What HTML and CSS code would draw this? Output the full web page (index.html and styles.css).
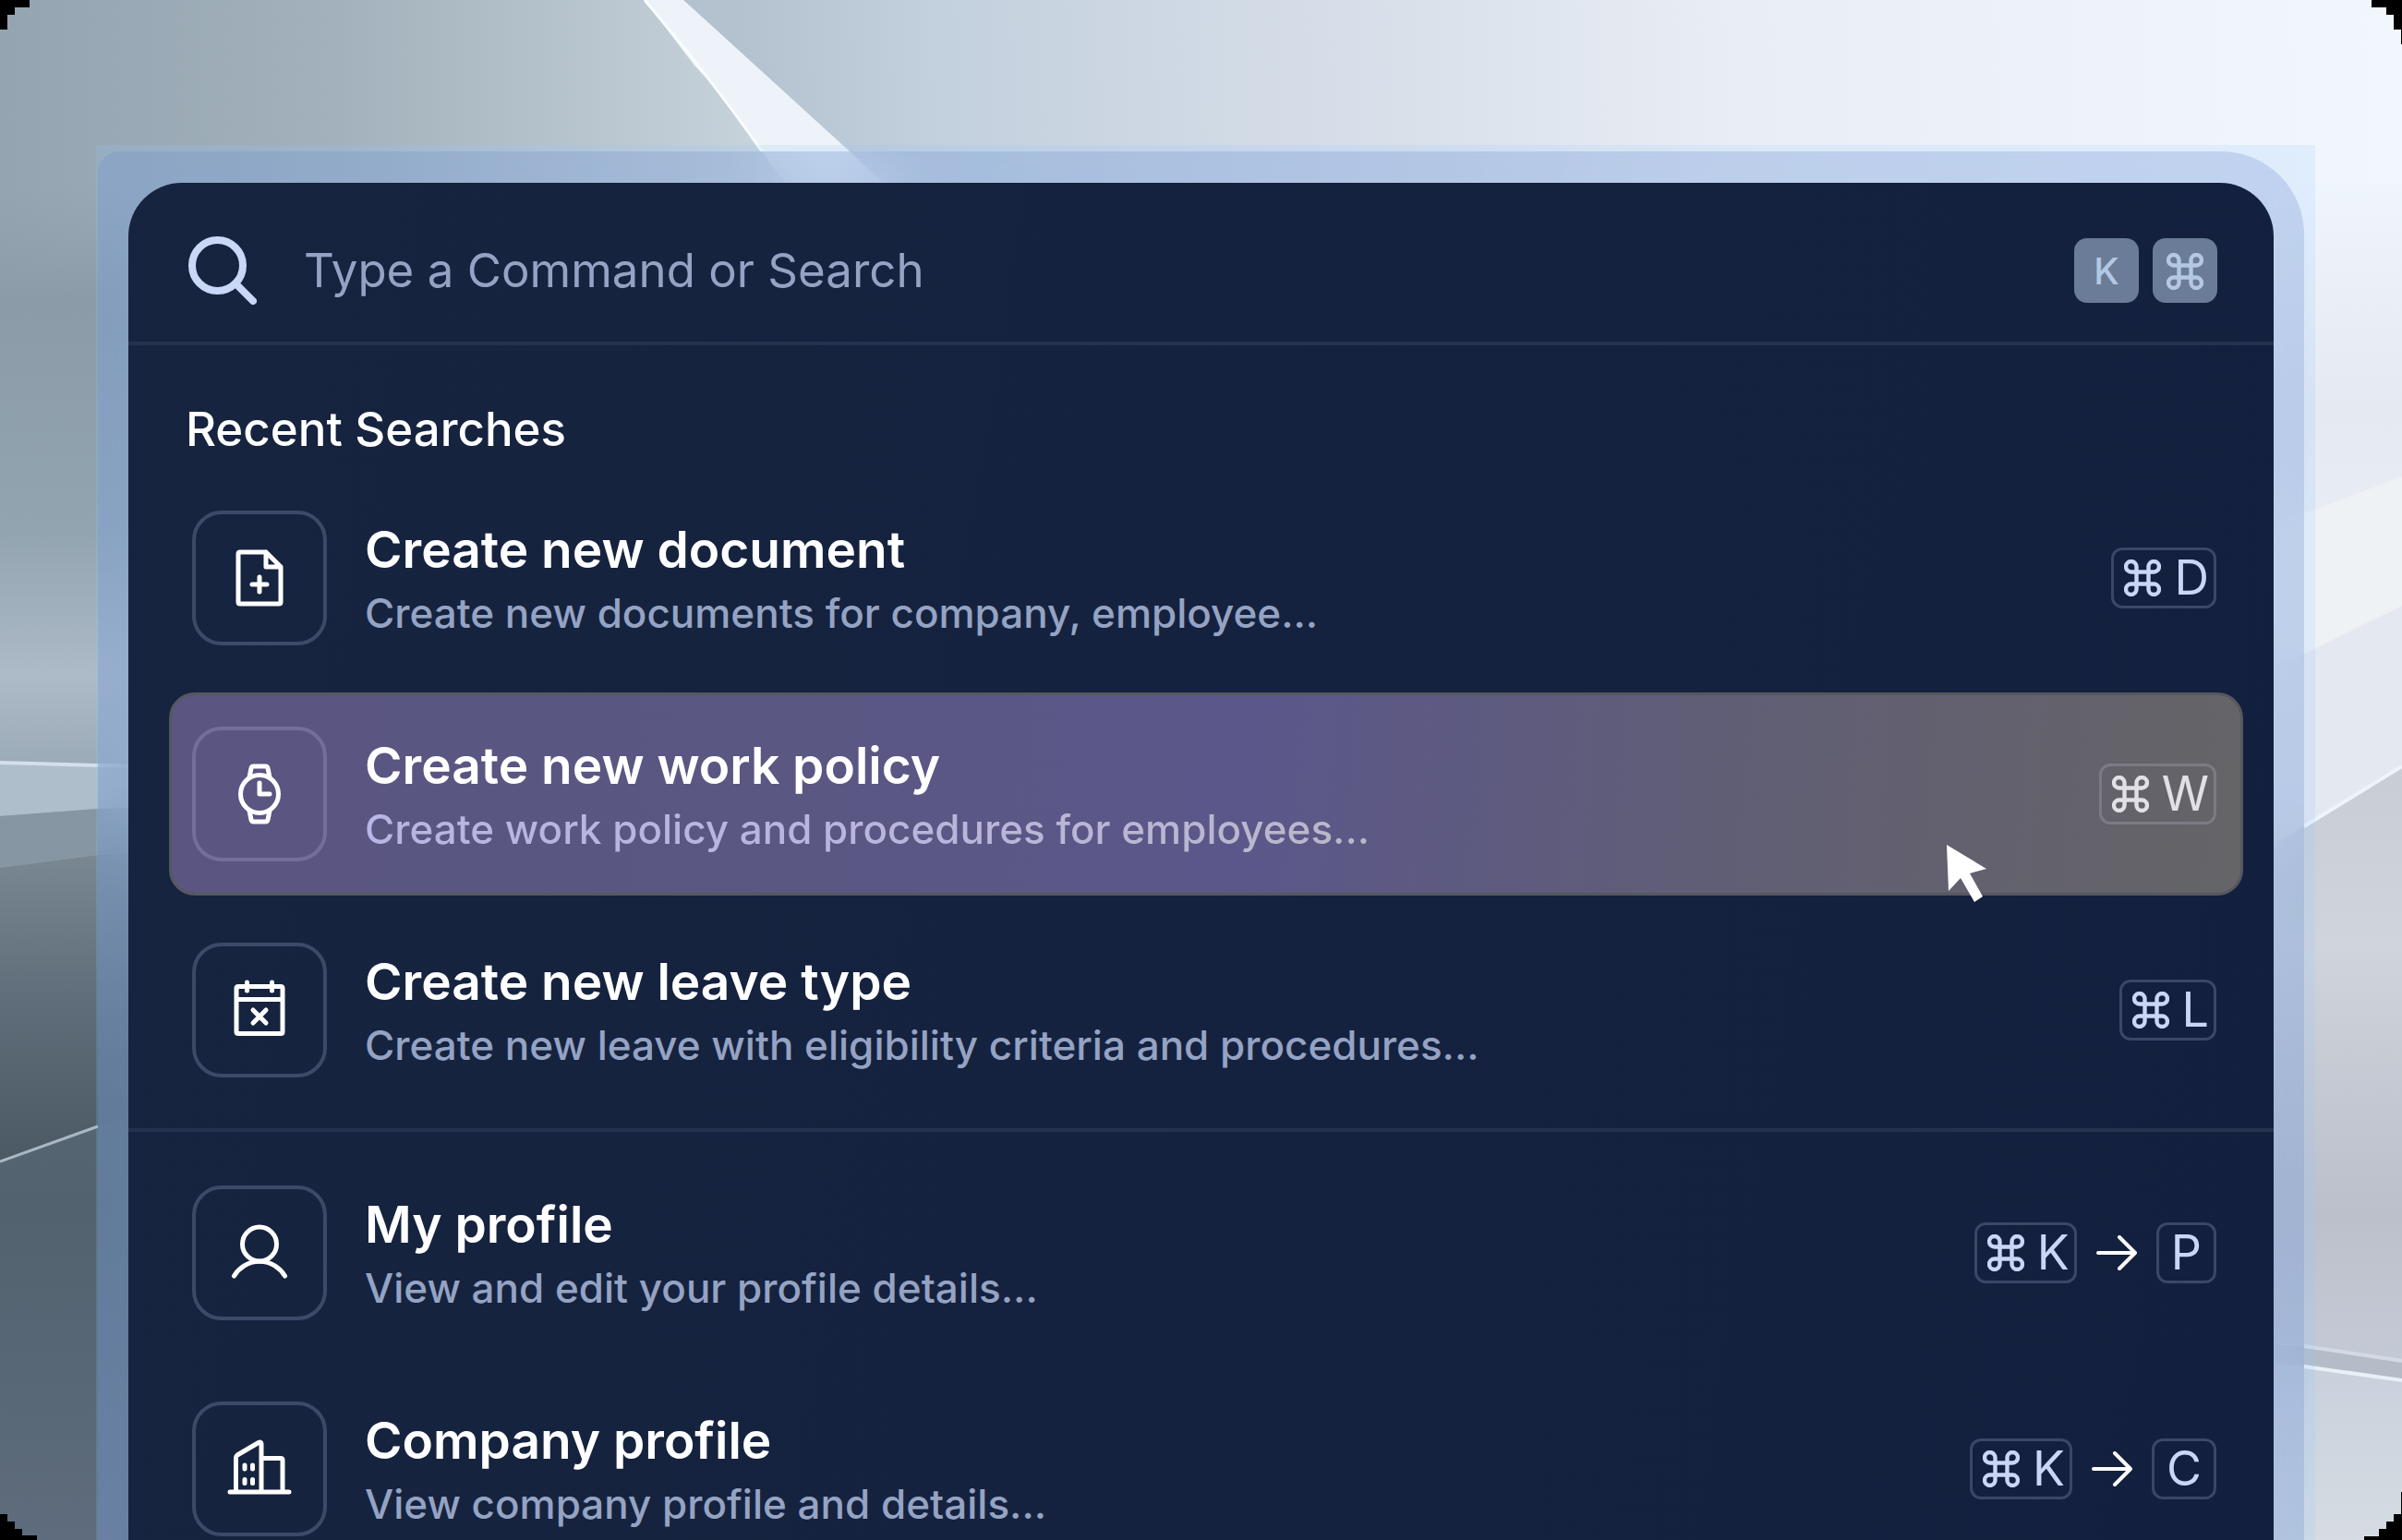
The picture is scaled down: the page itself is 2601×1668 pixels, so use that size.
FILE: index.html
```html
<!DOCTYPE html>
<html lang="en">
<head>
<meta charset="utf-8">
<meta name="viewport" content="width=device-width, initial-scale=1">
<title>Command palette</title>
<link rel="stylesheet" href="styles.css">
</head>
<body>
<svg class="wallpaper" viewBox="0 0 2601 1668" preserveAspectRatio="none" aria-hidden="true">
  <defs>
    <linearGradient id="sky" x1="0" x2="1" y1="0" y2="0">
      <stop offset="0" stop-color="#94a4b1"/><stop offset=".14" stop-color="#a2b1bb"/><stop offset=".31" stop-color="#c6d2da"/>
    </linearGradient>
    <linearGradient id="skyRight" gradientUnits="userSpaceOnUse" x1="800" x2="2601" y1="60" y2="0">
      <stop offset="0" stop-color="#b4c1ce"/><stop offset=".12" stop-color="#c3d0dd"/><stop offset=".4" stop-color="#d9e0ea"/><stop offset=".6" stop-color="#e9eef5"/><stop offset="1" stop-color="#f2f7fe"/>
    </linearGradient>
    <linearGradient id="leftWall" x1="0" x2="0" y1="0" y2="1">
      <stop offset="0" stop-color="#8f9fab" stop-opacity="0"/><stop offset=".2" stop-color="#8b9ba8"/><stop offset=".6" stop-color="#93a4b1"/><stop offset=".85" stop-color="#adbac7"/><stop offset="1" stop-color="#9cabb8"/>
    </linearGradient>
    <linearGradient id="slope" x1="0" x2="0" y1="0" y2="1">
      <stop offset="0" stop-color="#7e8c96"/><stop offset=".5" stop-color="#5f6e7a"/><stop offset="1" stop-color="#4b5964"/>
    </linearGradient>
    <linearGradient id="floor" x1="0" x2="0" y1="0" y2="1">
      <stop offset="0" stop-color="#5b6c7a"/><stop offset=".4" stop-color="#52626e"/><stop offset="1" stop-color="#5e6c7d"/>
    </linearGradient>
    <linearGradient id="rightWall" x1="0" x2="0" y1="0" y2="1">
      <stop offset="0" stop-color="#eff5fc"/><stop offset=".55" stop-color="#e5e9f1"/><stop offset="1" stop-color="#eaeff6"/>
    </linearGradient>
    <linearGradient id="rightMid" gradientUnits="userSpaceOnUse" x1="0" x2="0" y1="850" y2="1470">
      <stop offset="0" stop-color="#c9ced6"/><stop offset=".28" stop-color="#d0d4dc"/><stop offset=".5" stop-color="#c6cad3"/><stop offset=".75" stop-color="#bcc0cb"/><stop offset="1" stop-color="#c4cad5"/>
    </linearGradient>
    <linearGradient id="rightLow" x1="0" x2="0" y1="0" y2="1">
      <stop offset="0" stop-color="#c6cfdb"/><stop offset="1" stop-color="#d6dce2"/>
    </linearGradient>
  </defs>
  <rect width="2601" height="1668" fill="url(#sky)"/>
  <path d="M740 0H2601V1668H920V164Z" fill="url(#skyRight)"/>
  <path d="M698 0H740L920 164L1000 240H880L825 164Q790 110 752 71Z" fill="#edf3f8"/>
  <path d="M698 0Q770 85 825 164" fill="none" stroke="#fafdff" stroke-width="3"/>
  <rect y="200" width="200" height="626" fill="url(#leftWall)"/>
  <path d="M0 826L600 838V890L106 876L0 884Z" fill="#afbecb"/>
  <path d="M0 826L106 829L600 838" fill="none" stroke="#d3dfea" stroke-width="4"/>
  <path d="M0 884L106 876L600 860V920L106 926L0 940Z" fill="#8697a3"/>
  <path d="M0 940L106 926L600 900V1080L106 1220L0 1258Z" fill="url(#slope)"/>
  <path d="M0 1258L106 1220L600 1060V1668H0Z" fill="url(#floor)"/>
  <path d="M0 1258L106 1220" stroke="#a9b8c4" stroke-width="3"/>
  <path d="M2200 200H2601V520L2507 552L2200 640Z" fill="url(#rightWall)"/>
  <path d="M2200 640L2507 552L2601 516V656L2495 708L2200 830Z" fill="#eef2f5"/>
  <path d="M2200 830L2495 708L2601 656V830L2495 895L2200 1060Z" fill="#e4e8f0"/>
  <path d="M2200 1060L2495 895L2601 830V1472L2495 1458L2200 1430Z" fill="url(#rightMid)"/>
  <path d="M2495 895L2601 830" stroke="#eef4fb" stroke-width="4"/>
  <path d="M2200 1440L2495 1458L2601 1474V1494L2495 1480L2200 1450Z" fill="#b5bbc7"/>
  <path d="M2200 1450L2495 1480L2601 1494V1668H2200Z" fill="url(#rightLow)"/>
  <path d="M2495 1458L2601 1474" stroke="#d4dae5" stroke-width="4"/>
  <path d="M2495 1480L2601 1495" stroke="#e9f0f8" stroke-width="4"/>
  <path d="M0 0H32V8H16V16H8V32H0Z M2568 0H2601V48H2600V32H2592V16H2584V8H2568Z M0 1640H8V1648H16V1656H24V1663H40V1668H0Z M2601 1616V1668H2560V1664H2576V1656H2584V1648H2592V1640H2600V1616Z" fill="#000"/>
</svg>

<svg class="sprite" aria-hidden="true">
  <symbol id="cmd" viewBox="0 0 40 40">
    <path d="M26.5 7.75v24.5a5.75 5.75 0 1 0 5.75-5.75H7.75a5.75 5.75 0 1 0 5.75 5.75V7.75a5.75 5.75 0 1 0-5.75 5.75h24.5a5.75 5.75 0 1 0-5.75-5.75z" fill="none" stroke="currentColor" stroke-width="4.400"/>
  </symbol>
  <symbol id="arrow" viewBox="0 0 44 38">
    <path d="M2 19H42M25 2L42 19L25 36" fill="none" stroke="currentColor" stroke-width="4" stroke-linecap="round" stroke-linejoin="round"/>
  </symbol>
</svg>

<div class="glow">
<div class="frame">
<main class="palette">
  <form class="search" role="search">
    <svg class="search-icon" viewBox="0 0 74 74" aria-hidden="true"><circle cx="31.5" cy="31.5" r="27.5"/><path d="M51 51L70 70"/></svg>
    <input class="search-input" type="text" aria-label="Command or search" placeholder="Type a Command or Search">
    <span class="hint"><kbd class="hint-key">K</kbd><kbd class="hint-key"><svg class="cmd" aria-label="Command"><use href="#cmd"/></svg></kbd></span>
  </form>

  <section class="group">
    <h2 class="group-title">Recent Searches</h2>
    <ul class="list">
      <li><button class="item" type="button">
        <span class="tile"><svg class="icon" viewBox="0 0 72 72"><path d="M43 8H15Q13 8 13 10V62Q13 64 15 64H57Q59 64 59 62V24L43 8V24H59M36 35V51M28 43H44"/></svg></span>
        <span class="text"><span class="title">Create new document</span><span class="desc">Create new documents for company, employee...</span></span>
        <span class="keys"><kbd class="key"><svg class="cmd" aria-label="Command"><use href="#cmd"/></svg>D</kbd></span>
      </button></li>
      <li><button class="item item-active" type="button">
        <span class="tile"><svg class="icon" viewBox="0 0 72 72"><circle cx="36" cy="36" r="20.5"/><path d="M25 18L27 8Q27.500 6 29.500 6H42.500Q44.500 6 45 8L47 18M25 54L27 64Q27.500 66 29.500 66H42.500Q44.500 66 45 64L47 54M36 24V36H47"/></svg></span>
        <span class="text"><span class="title">Create new work policy</span><span class="desc">Create work policy and procedures for employees...</span></span>
        <span class="keys"><kbd class="key"><svg class="cmd" aria-label="Command"><use href="#cmd"/></svg>W</kbd></span>
        <svg class="pointer" viewBox="0 0 43 62" aria-hidden="true"><path d="M0 0L43 26L25 31L39 56L30 62L15 36L2 50Z" fill="#fff"/></svg>
      </button></li>
      <li><button class="item" type="button">
        <span class="tile"><svg class="icon" viewBox="0 0 72 72"><path d="M13 10.500H59Q61 10.500 61 12.500V59.500Q61 61.500 59 61.500H13Q11 61.500 11 59.500V12.500Q11 10.500 13 10.500ZM11 24.500H61M22.500 6V15M49.500 6V15M29 36L43 50M43 36L29 50"/></svg></span>
        <span class="text"><span class="title">Create new leave type</span><span class="desc">Create new leave with eligibility criteria and procedures...</span></span>
        <span class="keys"><kbd class="key"><svg class="cmd" aria-label="Command"><use href="#cmd"/></svg>L</kbd></span>
      </button></li>
    </ul>
  </section>

  <section class="group group-divided">
    <ul class="list">
      <li><button class="item" type="button">
        <span class="tile"><svg class="icon" viewBox="0 0 72 72"><circle cx="36" cy="26.500" r="18.500"/><path d="M8.500 61A32 32 0 0 1 63.500 61"/></svg></span>
        <span class="text"><span class="title">My profile</span><span class="desc">View and edit your profile details...</span></span>
        <span class="keys"><kbd class="key"><svg class="cmd" aria-label="Command"><use href="#cmd"/></svg>K</kbd><svg class="arrow" aria-label="then"><use href="#arrow"/></svg><kbd class="key key-single">P</kbd></span>
      </button></li>
      <li><button class="item" type="button">
        <span class="tile"><svg class="icon" viewBox="0 0 72 72"><path d="M4 61H68M10.500 61V24Q10.500 22 12 21L35 7.500Q38 6 38 9V61M38 24.500H59Q61 24.500 61 26.500V61M20 32V36M28.500 32V36M20 47.500V51.500M28.500 47.500V51.500"/></svg></span>
        <span class="text"><span class="title">Company profile</span><span class="desc">View company profile and details...</span></span>
        <span class="keys"><kbd class="key"><svg class="cmd" aria-label="Command"><use href="#cmd"/></svg>K</kbd><svg class="arrow" aria-label="then"><use href="#arrow"/></svg><kbd class="key key-single">C</kbd></span>
      </button></li>
    </ul>
  </section>
</main>
</div>
</div>
</body>
</html>
```
FILE: styles.css
```css
* { box-sizing: border-box; }

body {
  margin: 0;
  height: 100vh;
  overflow: hidden;
  padding: 157px 94px 0 104px;
  font-family: Inter, "Liberation Sans", sans-serif;
  color: #fff;
  background: #96a6b2;
}

.wallpaper {
  position: fixed;
  inset: 0;
  width: 100%;
  height: 100%;
  z-index: -1;
}

.sprite { position: absolute; width: 0; height: 0; }

.glow {
  padding: 7px 12px 0 2px;
  background: rgba(150, 200, 255, .18);
}

.frame {
  padding: 34px 33px 0;
  border-radius: 24px 90px 0 0;
  background: rgba(110, 142, 205, .28);
  backdrop-filter: blur(36px);
}

.palette {
  min-height: 100vh;
  border-radius: 58px 58px 0 0;
  background: linear-gradient(100deg, #16243f 0%, #15223f 50%, #121f3e 100%);
}

.search {
  display: flex;
  align-items: center;
  height: 176px;
  padding: 18px 61px 0 65px;
  border-bottom: 4px solid #25324f;
}

.search-icon {
  width: 74px;
  height: 74px;
  flex: none;
  fill: none;
  stroke: #c9d8f6;
  stroke-width: 8;
  stroke-linecap: round;
}

.search-input {
  flex: 1;
  min-width: 0;
  height: 80px;
  margin-left: 51px;
  padding: 0;
  border: 0;
  outline: 0;
  background: none;
  color: #fff;
  font: 400 51px/80px Inter, "Liberation Sans", sans-serif;
}

.search-input::placeholder { color: #95a2c3; opacity: 1; }

.hint { display: flex; gap: 15px; }

.hint-key {
  display: flex;
  align-items: center;
  justify-content: center;
  width: 70px;
  height: 70px;
  padding-top: 2px;
  border-radius: 14px;
  background: #6b7c98;
  color: #b3c8e3;
  font: 500 40px/48px Inter, "Liberation Sans", sans-serif;
}

.cmd { width: 40px; height: 40px; flex: none; }

.group-title {
  margin: 0;
  padding: 59px 63px 19px 62px;
  font-size: 51px;
  line-height: 64px;
  font-weight: 500;
}

.group-divided {
  margin-top: 18px;
  padding-top: 21px;
  border-top: 4px solid #25324f;
}

.list {
  display: flex;
  flex-direction: column;
  gap: 14px;
  margin: 0;
  padding: 0 33px 0 44px;
  list-style: none;
}

.item {
  position: relative;
  display: flex;
  align-items: center;
  width: 100%;
  padding: 34px 26px 34px 22px;
  border: 3px solid transparent;
  border-radius: 28px;
  background: none;
  color: #fff;
  font-family: inherit;
  text-align: left;
}

.item-active {
  border-color: #55585f;
  background: linear-gradient(95deg, #5a5581 0%, #5a5783 30%, #5b578a 52%, #615f73 78%, #656467 100%);
}

.tile {
  display: flex;
  align-items: center;
  justify-content: center;
  flex: none;
  width: 146px;
  height: 146px;
  border: 4px solid #3c4a68;
  border-radius: 32px;
}

.item-active .tile { border-color: #736e9b; }

.icon {
  width: 72px;
  height: 72px;
  fill: none;
  stroke: #fff;
  stroke-width: 5;
  stroke-linecap: round;
  stroke-linejoin: round;
}

.text {
  display: flex;
  flex-direction: column;
  flex: 1;
  margin-left: 41px;
  padding-top: 3px;
}

.title { font-size: 55px; line-height: 72px; font-weight: 600; }

.desc { font-size: 44px; line-height: 66px; font-weight: 500; color: #95a3c3; }

.item-active .desc {
  color: transparent;
  background: linear-gradient(90deg, #b9b5e4 0, #b9b5e0 500px, #b9b8c8 1100px);
  background-clip: text;
}

.keys { display: flex; align-items: center; gap: 21px; }

.key {
  display: flex;
  align-items: center;
  gap: 14px;
  height: 66px;
  padding: 0 5px 0 11px;
  border: 3px solid #3a4766;
  border-radius: 12px;
  color: #c9d6f6;
  font: 400 52px/60px Inter, "Liberation Sans", sans-serif;
}

.key-single { padding: 0 13px; }

.item-active .key { border-color: #7b7b84; color: #e0e0e6; }

.arrow { width: 44px; height: 38px; color: #fff; }

.pointer {
  position: absolute;
  right: 275px;
  bottom: -10px;
  width: 43px;
  height: 62px;
}
```
